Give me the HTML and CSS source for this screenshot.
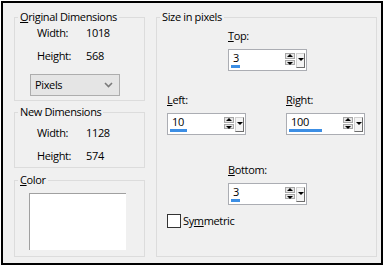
FILE: index.html
```html
<!DOCTYPE html>
<html>
<head>
    <meta charset="UTF-8">
    <title>Add Borders</title>
    <link rel="stylesheet" href="styles.css">
</head>
<body>
    <div class="dialog">
        <div class="left-col">
            <fieldset class="group group-orig">
                <legend><u>O</u>riginal Dimensions</legend>
                <div class="dim-row"><span class="dim-label">Width:</span><span>1018</span></div>
                <div class="dim-row"><span class="dim-label">Height:</span><span>568</span></div>
                <div class="select">
                    <span>Pixels</span>
                    <svg width="9" height="6" viewBox="0 0 9 6"><path d="M1 1 L4.5 4.5 L8 1" fill="none" stroke="#7a7a7a" stroke-width="1.6"/></svg>
                </div>
            </fieldset>

            <fieldset class="group group-new">
                <legend>New Dimensions</legend>
                <div class="dim-row"><span class="dim-label">Width:</span><span>1128</span></div>
                <div class="dim-row"><span class="dim-label">Height:</span><span>574</span></div>
            </fieldset>

            <fieldset class="group group-color">
                <legend><u>C</u>olor</legend>
                <div class="swatch"></div>
            </fieldset>
        </div>

        <fieldset class="group group-size">
            <legend>Size in pixels</legend>

            <div class="row row-top">
                <div class="spin-block">
                    <div class="spin-label"><u>T</u>op:</div>
                    <div class="spin">
                        <span class="spin-value">3</span>
                        <span class="spin-bar" style="width: 9px"></span>
                        <span class="updown"><i class="up"></i><i class="down"></i></span>
                        <span class="drop"></span>
                    </div>
                </div>
            </div>

            <div class="row row-mid">
                <div class="spin-block">
                    <div class="spin-label"><u>L</u>eft:</div>
                    <div class="spin">
                        <span class="spin-value">10</span>
                        <span class="spin-bar" style="width: 17px"></span>
                        <span class="updown"><i class="up"></i><i class="down"></i></span>
                        <span class="drop"></span>
                    </div>
                </div>
                <div class="spin-block">
                    <div class="spin-label"><u>R</u>ight:</div>
                    <div class="spin">
                        <span class="spin-value">100</span>
                        <span class="spin-bar" style="width: 33px"></span>
                        <span class="updown"><i class="up"></i><i class="down"></i></span>
                        <span class="drop"></span>
                    </div>
                </div>
            </div>

            <div class="row row-bottom">
                <div class="spin-block">
                    <div class="spin-label"><u>B</u>ottom:</div>
                    <div class="spin">
                        <span class="spin-value">3</span>
                        <span class="spin-bar" style="width: 9px"></span>
                        <span class="updown"><i class="up"></i><i class="down"></i></span>
                        <span class="drop"></span>
                    </div>
                </div>
            </div>

            <label class="check"><span class="box"></span><span>Sy<u>m</u>metric</span></label>
        </fieldset>
    </div>
</body>
</html>
```

FILE: styles.css
```css
/* Add Borders dialog */
body {
    margin: 0;
    background: #fff;
    font-family: "Open Sans", "Noto Sans", sans-serif;
    font-size: 11px;
    line-height: 14px;
    letter-spacing: -0.35px;
    color: #000;
}

u {
    text-decoration: underline;
    text-underline-offset: 1px;
}

.dialog {
    box-sizing: border-box;
    margin: 1px;
    width: 382px;
    height: 264px;
    border: 2px solid #000;
    background: #f0f0f0;
    display: flex;
    padding: 7px 0 0 11px;
    gap: 11px;
}

.left-col {
    display: flex;
    flex-direction: column;
    width: 131px;
}

.group {
    box-sizing: border-box;
    margin: 0;
    border: 1px solid #dcdcdc;
    padding: 0 0 0 22px;
}

.group legend {
    padding: 0 2px;
    margin-left: -19px;
    line-height: 14px;
}

.group-orig {
    height: 91px;
}

.group-new {
    margin-top: 4px;
    height: 63px;
}

.group-color {
    margin-top: 5px;
    height: 84px;
    padding-left: 14px;
}

.group-color legend {
    margin-left: -11px;
}

.dim-row {
    display: flex;
    height: 14px;
    margin-top: 9px;
}

.group-orig .dim-row:first-of-type {
    margin-top: 2px;
}

.group-new .dim-row:first-of-type {
    margin-top: 7px;
}

.dim-label {
    width: 49px;
}

.select {
    margin: 11px 0 0 -7px;
    width: 90px;
    height: 22px;
    border: 1px solid #adadad;
    background: #e5e5e5;
    display: flex;
    align-items: center;
    justify-content: space-between;
    padding: 0 6px 0 4px;
    box-sizing: border-box;
}

.swatch {
    margin-top: 6px;
    width: 97px;
    height: 57px;
    background: #fff;
    border-top: 1px solid #a0a0a0;
    border-left: 1px solid #a0a0a0;
    box-sizing: border-box;
}

.group-size {
    width: 221px;
    height: 247px;
    padding: 0 0 0 10px;
}

.group-size legend {
    margin-left: -7px;
}

.row {
    display: flex;
}

.row-top {
    padding-left: 61px;
    margin-top: 5px;
}

.row-mid {
    margin-top: 22px;
    gap: 40px;
}

.row-bottom {
    padding-left: 61px;
    margin-top: 28px;
}

.spin-label {
    height: 14px;
    margin-bottom: 6px;
}

.spin {
    position: relative;
    width: 79px;
    height: 22px;
    box-sizing: border-box;
    border: 1px solid #abadb3;
    background: #fff;
}

.spin-value {
    position: absolute;
    left: 4px;
    top: 1px;
}

.spin-bar {
    position: absolute;
    left: 2px;
    bottom: 2px;
    height: 3px;
    background: #3c8ee4;
}

.updown {
    position: absolute;
    left: 56px;
    top: 3px;
    width: 10px;
    height: 12px;
    display: flex;
    flex-direction: column;
    gap: 1px;
}

.updown i {
    flex: 1;
    border: 1px solid #a6a6a6;
    background: #e6e6e6;
    position: relative;
}

.updown i::after {
    content: "";
    position: absolute;
    left: 1px;
    border-left: 3px solid transparent;
    border-right: 3px solid transparent;
}

.updown .up::after {
    top: 0;
    border-bottom: 3px solid #000;
}

.updown .down::after {
    top: 1px;
    border-top: 3px solid #000;
}

.drop {
    position: absolute;
    left: 67px;
    top: 3px;
    width: 9px;
    height: 15px;
    box-sizing: border-box;
    background: #f4f4f4;
    border: 1px solid #d0d0d0;
    border-right-color: #6d6d6d;
    border-bottom-color: #6d6d6d;
}

.drop::after {
    content: "";
    position: absolute;
    left: 1px;
    top: 4px;
    border-left: 3px solid transparent;
    border-right: 3px solid transparent;
    border-top: 3px solid #000;
}

.check {
    display: flex;
    align-items: center;
    gap: 2px;
    margin-top: 9px;
}

.box {
    width: 12px;
    height: 12px;
    border: 1px solid #333;
    background: #fff;
}
```
